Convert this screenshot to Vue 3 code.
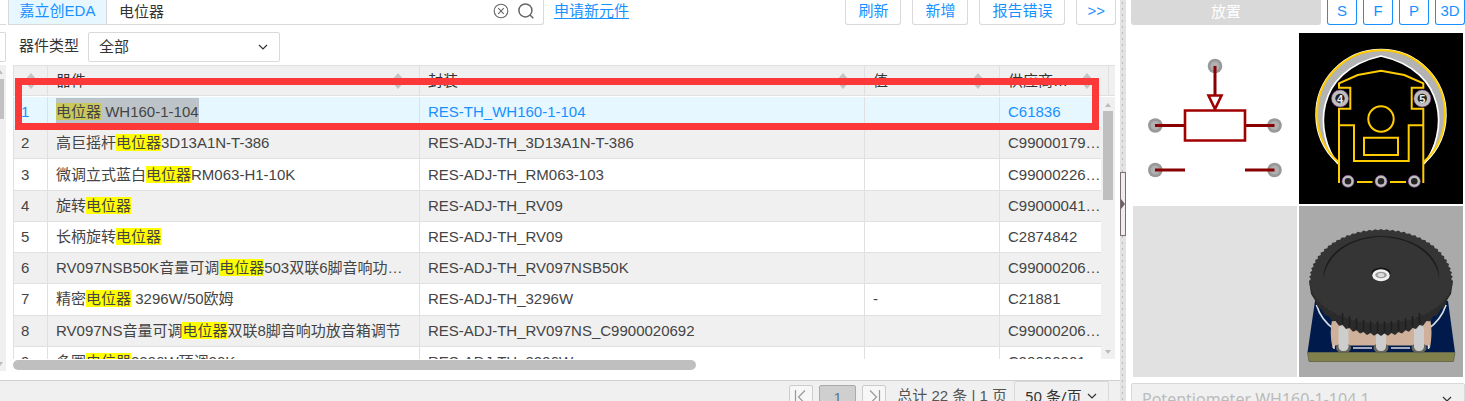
<template>
    <div class="page">
        <aside class="side">
            <div class="side-search"></div>
            <div class="side-select"></div>
            <div class="side-track">
                <i class="arrow up"></i>
                <div class="side-thumb"></div>
                <i class="arrow down"></i>
            </div>
            <div class="side-foot"></div>
        </aside>

        <main class="main">
            <div class="toolbar">
                <form class="search" @submit.prevent>
                    <button type="button" class="tab">嘉立创EDA</button>
                    <input v-model="keyword" type="text" aria-label="搜索">
                    <button type="button" class="icon-btn" aria-label="清除" @click="keyword = ''">
                        <svg width="16" height="16" viewBox="0 0 16 16">
                            <circle cx="8" cy="8" r="6.8" />
                            <path d="M5.2 5.2L10.8 10.8M10.8 5.2L5.2 10.8" />
                        </svg>
                    </button>
                    <button type="submit" class="icon-btn" aria-label="查找">
                        <svg width="16" height="16" viewBox="0 0 16 16" class="lens">
                            <circle cx="7.4" cy="7.4" r="6.5" />
                            <path d="M12 12L15.3 15.3" />
                        </svg>
                    </button>
                </form>
                <a href="#" class="apply">申请新元件</a>
                <div class="actions">
                    <button v-for="label in actions" :key="label" type="button">{{ label }}</button>
                </div>
            </div>

            <div class="filter">
                <label for="device-type">器件类型</label>
                <div class="select type-select">
                    <select id="device-type" v-model="deviceType">
                        <option>全部</option>
                    </select>
                    <svg class="chevron" width="10" height="6" viewBox="0 0 10 6"><path d="M1 1L5 5L9 1" /></svg>
                </div>
            </div>

            <div class="grid">
                <table class="head">
                    <colgroup>
                        <col class="c-no"><col class="c-name"><col><col class="c-value"><col class="c-code-head"><col class="c-fill">
                    </colgroup>
                    <thead>
                        <tr>
                            <th v-for="(title, i) in columns" :key="i">
                                <div class="th" :class="{ first: i === 0 }">
                                    <span v-if="title">{{ title }}</span>
                                    <svg width="12" height="16" viewBox="0 0 12 16">
                                        <path d="M6 0L12 7H0ZM0 9H12L6 16Z" />
                                        <path d="M1 7H11V9H1Z" />
                                    </svg>
                                </div>
                            </th>
                            <th></th>
                        </tr>
                    </thead>
                </table>

                <div class="viewport">
                    <div class="rows">
                        <table class="body">
                            <colgroup>
                                <col class="c-no"><col class="c-name"><col><col class="c-value"><col class="c-code">
                            </colgroup>
                            <tbody>
                                <tr v-for="(row, i) in rows" :key="i" :class="{ active: i === 0 }">
                                    <td>{{ i + 1 }}</td>
                                    <td><span class="name">{{ row.before }}<mark>电位器</mark>{{ row.after }}</span></td>
                                    <td>{{ row.footprint }}</td>
                                    <td>{{ row.value }}</td>
                                    <td>{{ row.code }}</td>
                                </tr>
                            </tbody>
                        </table>
                    </div>
                    <div class="track">
                        <i class="arrow up"></i>
                        <div class="thumb"></div>
                        <i class="arrow down"></i>
                    </div>
                </div>
                <div class="h-thumb"></div>
                <div class="marker"></div>
            </div>

            <footer class="pager">
                <button type="button" class="page-btn" aria-label="首页">
                    <svg width="16" height="16" viewBox="0 0 16 16"><path d="M2.5 1V15M12 1.5L5.5 8L12 14.5" /></svg>
                </button>
                <button type="button" class="page-btn current">1</button>
                <button type="button" class="page-btn" aria-label="末页">
                    <svg width="16" height="16" viewBox="0 0 16 16"><path d="M13.5 1V15M4 1.5L10.5 8L4 14.5" /></svg>
                </button>
                <span class="total">总计 22 条 | 1 页</span>
                <div class="select size-select">
                    <select v-model="pageSize" aria-label="每页条数">
                        <option>50 条/页</option>
                    </select>
                    <svg class="chevron" width="10" height="6" viewBox="0 0 10 6"><path d="M1 1L5 5L9 1" /></svg>
                </div>
            </footer>
        </main>

        <div class="splitter">
            <button type="button" class="handle" aria-label="收起面板"></button>
        </div>

        <section class="panel">
            <div class="panel-bar">
                <button type="button" class="place" disabled>放置</button>
                <button v-for="view in views" :key="view" type="button" class="view">{{ view }}</button>
            </div>

            <div class="previews">
                <!-- schematic symbol -->
                <svg class="symbol" viewBox="0 0 164 171">
                    <g v-for="([x, y]) in symbolPins" :key="x + '-' + y">
                        <circle :cx="x" :cy="y" r="7.3" fill="#999" />
                        <circle :cx="x" :cy="y" r="4.5" fill="#b0b0b0" />
                    </g>
                    <path d="M82 33V63M22 92.5H52M112 92.5H141.500M22 137H52M112 137H141.500" stroke="#880000" stroke-width="3" />
                    <path d="M75.500 62.500H88.500L82 76ZM52 77.500H112V107.500H52Z" fill="#fff" stroke="#a00000" stroke-width="2.600" />
                </svg>

                <!-- pcb footprint -->
                <svg class="footprint" viewBox="0 0 164 171">
                    <path d="M39 129A64 64 0 1 1 125 129C149 100 149 38 82 23C15 38 15 100 39 131Z" fill="#b3b3b3" />
                    <path d="M39 131C15 100 15 38 82 23C149 38 149 100 125 131" fill="none" stroke="#fff" stroke-width="1.700" />
                    <path d="M37.500 129A65 65 0 1 1 126.500 129" fill="none" stroke="#fff" stroke-width="1.500" />
                    <g fill="none" stroke="#ffcc00" stroke-width="2">
                        <path d="M39.500 129A64 64 0 1 1 124.500 129" />
                        <path d="M40 150V75.700H51.300V54.700H40V50.300L58.700 42L82 37.700L105.300 42L124.300 50.300V54.700H112.700V75.700H124.300V150" />
                        <path d="M40 92.300H55V128H109.700V92.300H124.300" />
                        <circle cx="82" cy="86" r="12.700" />
                        <path d="M65 104.700H99V122H65ZM58 149H73.500M91 149H107" />
                    </g>
                    <g v-for="x in [49, 82, 115.3]" :key="x">
                        <circle :cx="x" cy="148.300" r="6" fill="#bfbfbf" stroke="#8a4a9a" stroke-width=".6" />
                        <circle :cx="x" cy="148.300" r="3.300" fill="#222" />
                    </g>
                    <g v-for="pad in pads" :key="pad.no">
                        <circle :cx="pad.x" cy="65.500" r="8.500" fill="#bfbfbf" stroke="#8a4a9a" stroke-width=".6" />
                        <circle :cx="pad.x" cy="65.500" r="4.700" fill="#222" />
                        <text :x="pad.x" y="69.500" text-anchor="middle">{{ pad.no }}</text>
                    </g>
                </svg>

                <div class="blank"></div>

                <!-- 3d model -->
                <svg class="model" viewBox="0 0 164 171">
                    <path d="M16 95H149L156 146.500H8.500Z" fill="#001b4b" />
                    <path d="M8.500 146.500H156L154.500 155.500H10Z" fill="#80804d" stroke="#5f6242" stroke-width=".8" />
                    <path d="M17.500 99Q22 114 35 123M147 99Q142 114 129 123" fill="none" stroke="#d8dde5" stroke-width="1.700" />
                    <path d="M33.500 112H131Q134 126 131 142H129V139.500H35.500V142H33.500Q30 126 33.500 112Z" fill="#cfb19b" />
                    <path d="M35 139V143M129.500 139V143M54 142H73M92 142H111" fill="none" stroke="#d8dde5" stroke-width="1.500" />
                    <g v-for="x in [44.5, 82, 120]" :key="x">
                        <ellipse :cx="x" cy="142" rx="7.500" ry="5.300" fill="#66665a" />
                        <rect :x="x - 5" y="119" width="10" height="26" rx="4.500" fill="#cdcdcd" />
                    </g>
                    <path :d="skirt" fill="#2b2b2b" />
                    <path :d="wheel" fill="#353535" />
                    <path :d="ridges" fill="none" stroke="#1e1e1e" stroke-width="1.500" />
                    <path d="M24.300 73C24 52 44 31 82 30C120 31 141 52 140.300 73C138 52 118 32.500 82 30.800C46 32.500 27 52 24.300 73Z" fill="#1c1c1c" />
                    <ellipse cx="82" cy="67" rx="9.500" ry="5.500" fill="#161616" />
                    <ellipse cx="82" cy="69.300" rx="8.700" ry="6" fill="#f2f2f2" />
                    <ellipse cx="82" cy="69" rx="5.800" ry="3.200" fill="#999" />
                    <ellipse cx="82" cy="69" rx="3.400" ry="2" fill="#dcdcdc" />
                </svg>
            </div>

            <div class="select model-select">
                <select v-model="model" aria-label="模型">
                    <option>Potentiometer WH160-1-104.1</option>
                </select>
                <svg class="chevron" width="10" height="6" viewBox="0 0 10 6"><path d="M1 1L5 5L9 1" /></svg>
            </div>
        </section>
    </div>
</template>

<script setup>
import { ref } from 'vue';

const keyword = ref('电位器');
const deviceType = ref('全部');
const pageSize = ref('50 条/页');
const model = ref('Potentiometer WH160-1-104.1');

const actions = ['刷新', '新增', '报告错误', '>>'];
const views = ['S', 'F', 'P', '3D'];
const columns = ['', '器件', '封装', '值', '供应商编号'];

const rows = [
    { before: '', after: ' WH160-1-104', footprint: 'RES-TH_WH160-1-104', value: '', code: 'C61836' },
    { before: '高巨摇杆', after: '3D13A1N-T-386', footprint: 'RES-ADJ-TH_3D13A1N-T-386', value: '', code: 'C9900017921' },
    { before: '微调立式蓝白', after: 'RM063-H1-10K', footprint: 'RES-ADJ-TH_RM063-103', value: '', code: 'C9900022615' },
    { before: '旋转', after: '', footprint: 'RES-ADJ-TH_RV09', value: '', code: 'C9900004127' },
    { before: '长柄旋转', after: '', footprint: 'RES-ADJ-TH_RV09', value: '', code: 'C2874842' },
    { before: 'RV097NSB50K音量可调', after: '503双联6脚音响功放音箱调节', footprint: 'RES-ADJ-TH_RV097NSB50K', value: '', code: 'C9900020691' },
    { before: '精密', after: ' 3296W/50欧姆', footprint: 'RES-ADJ-TH_3296W', value: '-', code: 'C21881' },
    { before: 'RV097NS音量可调', after: '双联8脚音响功放音箱调节', footprint: 'RES-ADJ-TH_RV097NS_C9900020692', value: '', code: 'C9900020692' },
    { before: '多圈', after: '3296W顶调20K', footprint: 'RES-ADJ-TH_3296W', value: '', code: 'C9900000133' }
];

const symbolPins = [[82, 33], [22.3, 92.5], [141.5, 92.5], [22.3, 137], [141.5, 137]];
const pads = [{ no: 4, x: 41 }, { no: 5, x: 123.3 }];

// toothed rim of the thumb wheel
const teeth = 76;
const wheel = Array.from({ length: teeth * 2 }, (_, i) => {
    const a = Math.PI * i / teeth;
    const k = i % 2 ? 0.975 : 1;
    const ry = Math.sin(a) > 0 ? 43 : 52;
    const x = 82 + 72 * k * Math.cos(a);
    const y = 75 + ry * k * Math.sin(a);
    return `${i ? 'L' : 'M'}${x.toFixed(1)} ${y.toFixed(1)}`;
}).join('') + 'Z';

// side wall of the wheel, seen from the front
const wall = [];
for (let x = 12; x <= 152; x += 3.5) {
    const t = (x - 82) / 72;
    wall.push([x, 75 + 55 * Math.sqrt(1 - t * t) - (wall.length % 2 ? 2.5 : 0)]);
}
const skirt = 'M10 75' + wall.map(([x, y]) => `L${x} ${y.toFixed(1)}`).join('') + 'L154 75Z';
const ridges = wall
    .filter(([x], i) => i % 2 && x > 42 && x < 124)
    .map(([x, y]) => `M${x} ${(y - 12).toFixed(1)}V${(y - 1).toFixed(1)}`)
    .join('');
</script>

<style>
body {
    margin: 0;
    overflow: hidden;
}
</style>

<style scoped>
.page {
    display: flex;
    height: 100vh;
    overflow: hidden;
    background: #fff;
    color: #333;
    font-family: "Liberation Sans", "Noto Sans CJK SC", sans-serif;
    font-size: 15px;
}

.page * {
    box-sizing: border-box;
}

button,
input,
select {
    margin: 0;
    padding: 0;
    font: inherit;
    color: inherit;
    border: 0;
    background: none;
    outline: 0;
}

svg {
    display: block;
}

/* left edge */
.side {
    flex: none;
    width: 6px;
    display: flex;
    flex-direction: column;
}

.side-search {
    height: 25px;
    border-bottom: 1px solid #d9d9d9;
}

.side-select {
    height: 30px;
    margin: 7px 0 3px;
    border: 1px solid #d9d9d9;
    border-left: 0;
    border-radius: 0 2px 2px 0;
}

.side-track {
    height: 306px;
    padding: 5px 0;
    display: flex;
    flex-direction: column;
    background: #f0f0f0;
}

.side-thumb {
    width: 4px;
    height: 40px;
    margin: 5px 0 auto;
    background: #c1c1c1;
}

.side-foot {
    flex: 1;
    margin-top: 9px;
    border-top: 1px solid #d0d0d0;
    background: #f0f0f0;
}

.arrow {
    width: 0;
    height: 0;
    border: 3px solid transparent;
}

.arrow.up {
    border-top: 0;
    border-bottom: 4px solid #bbb;
}

.arrow.down {
    border-bottom: 0;
    border-top: 4px solid #bbb;
}

.side .arrow {
    margin-left: -3px;
}

/* main area */
.main {
    flex: 1;
    min-width: 0;
    display: flex;
    flex-direction: column;
}

.toolbar {
    flex: none;
    height: 25px;
    padding: 0 4px 0 2px;
    display: flex;
}

.toolbar button,
.panel-bar button {
    padding-bottom: 3px;
    line-height: 21px;
}

.search {
    flex: none;
    width: 536px;
    display: flex;
    border: 1px solid #d9d9d9;
    border-top: 0;
    border-bottom-right-radius: 3px;
}

.tab {
    width: 98px;
    background: #e6f7ff;
    border-right: 1px solid #d9d9d9;
    color: #1890ff;
}

.search input {
    flex: 1;
    min-width: 0;
    padding: 0 12px 3px;
}

.search .icon-btn {
    display: flex;
    align-items: center;
    padding: 0 9px 2px 0;
}

.icon-btn svg {
    fill: none;
    stroke: #666;
    stroke-width: 1.1;
}

.icon-btn .lens {
    stroke-width: 1.5;
}

.apply {
    margin-left: 10px;
    line-height: 22px;
    color: #1890ff;
    text-underline-offset: 2px;
}

.actions {
    margin-left: auto;
    display: flex;
    gap: 11px;
}

.actions button {
    padding: 0 12px 3px;
    border: 1px solid #d9d9d9;
    border-top: 0;
    border-radius: 0 0 3px 3px;
    color: #1890ff;
}

.actions button:last-child {
    padding: 0 10px 3px;
}

.filter {
    flex: none;
    display: flex;
    padding: 7px 0 3px 13px;
    gap: 9px;
    line-height: 28px;
}

.select {
    position: relative;
    border: 1px solid #d9d9d9;
    border-radius: 2px;
}

.select select {
    display: block;
    width: 100%;
    height: 100%;
    appearance: none;
    padding: 0 10px;
}

.chevron {
    position: absolute;
    right: 11px;
    top: 50%;
    margin-top: -3px;
    fill: none;
    stroke: #333;
    stroke-width: 1.2;
    pointer-events: none;
}

.type-select {
    width: 192px;
    height: 30px;
}

/* result grid */
.grid {
    position: relative;
    flex: none;
    margin: 0 5px 0 7px;
}

table {
    width: 100%;
    table-layout: fixed;
    border-collapse: separate;
    border-spacing: 0;
}

.c-no {
    width: 35px;
}

.c-name {
    width: 372px;
}

.c-value {
    width: 135px;
}

.c-code-head {
    width: 109px;
}

.c-code {
    width: 101px;
}

.c-fill {
    width: 6px;
}

.head {
    height: 31px;
    margin-bottom: 1px;
    background: #f0f0f0;
}

.head th {
    padding: 0;
    border: solid #e0e0e0;
    border-width: 1px 1px 1px 0;
    font-weight: normal;
    text-align: left;
}

.head th:first-child,
.body td:first-child {
    border-left: 1px solid #e0e0e0;
}

.head th:last-child {
    border-right: 0;
}

.th {
    display: flex;
    align-items: center;
    justify-content: space-between;
    gap: 8px;
    padding: 0 15px 0 8px;
    line-height: 29px;
}

.th.first {
    justify-content: center;
    padding: 0;
}

.th span {
    min-width: 0;
    overflow: hidden;
    white-space: nowrap;
    text-overflow: ellipsis;
}

.th svg {
    flex: none;
    fill: #c4c4c4;
}

.viewport {
    display: flex;
    height: 262px;
}

.rows {
    flex: 1;
    min-width: 0;
    overflow: hidden;
}

.body {
    height: 281px;
    color: #444;
}

.body td {
    padding: 0 0 0 8px;
    border: solid #e0e0e0;
    border-width: 0 1px 1px 0;
    line-height: 28px;
    overflow: hidden;
    white-space: nowrap;
    text-overflow: ellipsis;
}

.body td:first-child {
    padding-left: 7px;
}

.body td:nth-child(2) {
    padding-right: 16px;
}

.body td:last-child {
    border-right: 0;
}

.body tr:nth-child(even) {
    background: #f0f0f0;
}

.body tr.active {
    background: #e6f7ff;
    color: #1890ff;
}

mark {
    background: #ff0;
    color: inherit;
}

.active .name {
    display: inline-block;
    background: #bdc4c9;
    color: #444;
}

.active mark {
    background: #c8c85c;
}

.track {
    flex: none;
    width: 14px;
    padding: 6px 0 5px;
    display: flex;
    flex-direction: column;
    align-items: center;
    background: #f0f0f0;
}

.thumb {
    width: 10px;
    height: 89px;
    margin: 4px 0 auto;
    background: #bfbfbf;
}

.h-thumb {
    width: 62%;
    height: 10px;
    margin: 1px 0 10px;
    border-radius: 5px;
    background: #bfbfbf;
}

.marker {
    position: absolute;
    top: 13px;
    left: 2px;
    right: 16px;
    height: 52px;
    border: 7px solid #fc3838;
    pointer-events: none;
}

/* pager */
.pager {
    flex: none;
    height: 36px;
    padding-right: 11px;
    display: flex;
    justify-content: flex-end;
    border-top: 1px solid #d0d0d0;
    background: #f0f0f0;
    color: #555;
}

.page-btn {
    width: 24px;
    height: 24px;
    margin: 4px 6px 0 0;
    display: flex;
    align-items: center;
    justify-content: center;
    border: 1px solid #ccc;
    border-radius: 2px;
    background: #f7f7f7;
}

.page-btn svg {
    fill: none;
    stroke: #999;
    stroke-width: 1.2;
}

.page-btn.current {
    width: 37px;
    border-color: #aaa;
    background: #cfcfcf;
    color: #5a7796;
}

.total {
    margin: 0 7px 0 5px;
    line-height: 30px;
}

.size-select {
    width: 95px;
    height: 30px;
    color: #333;
    font-family: "Noto Sans", "Noto Sans CJK SC", sans-serif;
}

/* splitter */
.splitter {
    flex: none;
    width: 6px;
    display: flex;
    background: radial-gradient(circle, #bbb 1px, transparent 1px) 0 0 / 5px 6px repeat-y #e2e2e2;
}

.handle {
    width: 6px;
    height: 64px;
    margin-top: 172px;
    display: flex;
    align-items: center;
    border: 1px solid #7a6e70;
    background: #eee;
}

.handle::after {
    content: "";
    border: solid transparent;
    border-width: 5px 0 5px 4px;
    border-left-color: #6b6163;
}

/* preview panel */
.panel {
    flex: none;
    width: 339px;
}

.panel-bar {
    height: 25px;
    margin-left: 5px;
    display: flex;
    gap: 6px;
}

.place {
    flex: 1;
    border-radius: 0 0 3px 3px;
    background: #d9d9d9;
    color: #fff;
}

.view {
    width: 30px;
    border: 1px solid #1890ff;
    border-top: 0;
    border-radius: 0 0 3px 3px;
    color: #1890ff;
}

.previews {
    display: grid;
    grid-template-columns: 1fr 1fr;
    grid-auto-rows: 171px;
    gap: 2px;
    padding: 8px 2px 6px 7px;
}

.previews svg {
    width: 100%;
    height: 100%;
}

.footprint {
    background: #000;
}

.footprint text {
    font-size: 11px;
    font-weight: bold;
    fill: #f0f0f0;
}

.blank {
    background: #e1e1e1;
}

.model {
    background: #aaa;
}

.model-select {
    height: 32px;
    margin-left: 5px;
    background: #f0f0f0;
    color: #bbb;
    font-family: "Noto Sans", sans-serif;
    font-size: 16px;
}

.model-select .chevron {
    right: 12px;
}
</style>
